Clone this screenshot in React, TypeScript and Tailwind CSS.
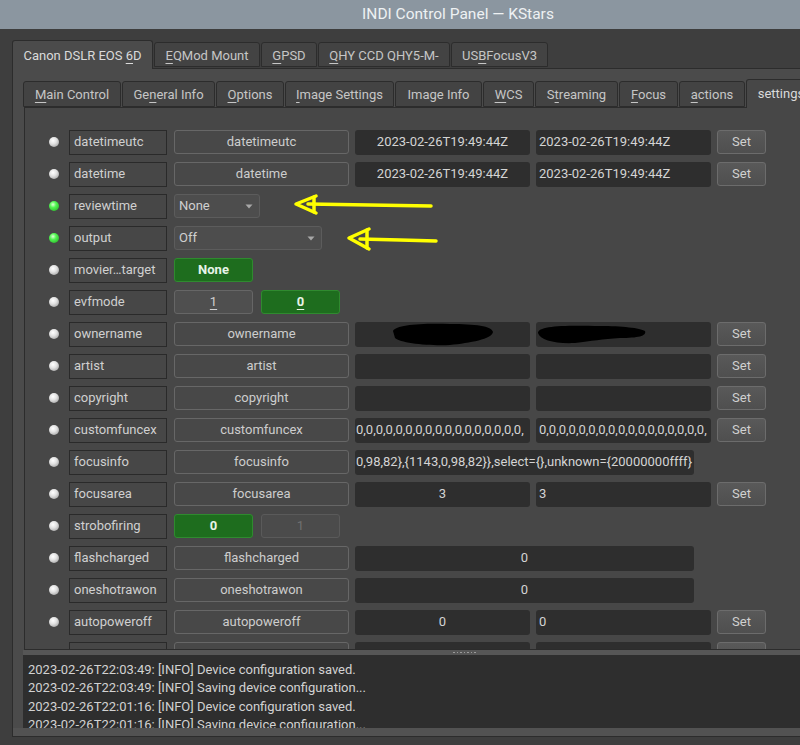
import React from "react";

type Btn = { text: string; on?: boolean; disabled?: boolean; u?: boolean };
type Row =
  | { kind: "text"; label: string; name: string; v1: string; v2: string; v1Left?: boolean; set?: string }
  | { kind: "select"; label: string; value: string; w: string }
  | { kind: "switch"; label: string; buttons: Btn[] }
  | { kind: "wide"; label: string; name: string; value: string; left?: boolean };

const stamp = "2023-02-26T19:49:44Z";
const zeros1 = "0,".repeat(17);
const zeros2 = "0,".repeat(17);

const rows: Row[] = [
  { kind: "text", label: "datetimeutc", name: "datetimeutc", v1: stamp, v2: stamp },
  { kind: "text", label: "datetime", name: "datetime", v1: stamp, v2: stamp },
  { kind: "select", label: "reviewtime", value: "None", w: "w-[86px]" },
  { kind: "select", label: "output", value: "Off", w: "w-[148px]" },
  { kind: "switch", label: "movier…target", buttons: [{ text: "None", on: true }] },
  { kind: "switch", label: "evfmode", buttons: [{ text: "1", u: true }, { text: "0", on: true, u: true }] },
  { kind: "text", label: "ownername", name: "ownername", v1: "", v2: "" },
  { kind: "text", label: "artist", name: "artist", v1: "", v2: "" },
  { kind: "text", label: "copyright", name: "copyright", v1: "", v2: "" },
  { kind: "text", label: "customfuncex", name: "customfuncex", v1: zeros1, v2: zeros2, v1Left: true },
  {
    kind: "wide",
    label: "focusinfo",
    name: "focusinfo",
    value: "0,98,82},{1143,0,98,82}},select={},unknown={20000000ffff}",
    left: true,
  },
  { kind: "text", label: "focusarea", name: "focusarea", v1: "3", v2: "3" },
  { kind: "switch", label: "strobofiring", buttons: [{ text: "0", on: true }, { text: "1", disabled: true }] },
  { kind: "wide", label: "flashcharged", name: "flashcharged", value: "0" },
  { kind: "wide", label: "oneshotrawon", name: "oneshotrawon", value: "0" },
  { kind: "text", label: "autopoweroff", name: "autopoweroff", v1: "0", v2: "0" },
  // last row is cut by the splitter, only its top edge shows
  { kind: "text", label: "", name: "", v1: "", v2: "", set: "" },
];

const greenLeds = ["reviewtime", "output"];

function Mnemonic({ text, at }: { text: string; at?: number }) {
  if (at === undefined) return <span>{text}</span>;
  return (
    <span className="whitespace-pre">
      {text.slice(0, at)}
      <span className="underline decoration-1 underline-offset-[3px]">{text[at]}</span>
      {text.slice(at + 1)}
    </span>
  );
}

const topTabs = [
  { text: "Canon DSLR EOS 6D", at: 15, w: "w-[141px]", active: true },
  { text: "EQMod Mount", at: 0, w: "w-[106px]" },
  { text: "GPSD", at: 0, w: "w-[56px]" },
  { text: "QHY CCD QHY5-M-", at: 0, w: "w-[132px]" },
  { text: "USBFocusV3", at: 2, w: "w-[97px]" },
];

const innerTabs = [
  { text: "Main Control", at: 0, w: "w-[98px]" },
  { text: "General Info", at: 2, w: "w-[93px]" },
  { text: "Options", at: 0, w: "w-[68px]" },
  { text: "Image Settings", at: 0, w: "w-[109px]" },
  { text: "Image Info", w: "w-[87px]" },
  { text: "WCS", at: 0, w: "w-[51px]" },
  { text: "Streaming", at: 1, w: "w-[83px]" },
  { text: "Focus", at: 0, w: "w-[59px]" },
  { text: "actions", at: 0, w: "w-[66px]" },
  { text: "settings", w: "w-[70px]", active: true },
];

function Led({ green }: { green?: boolean }) {
  return (
    <div
      className={`w-[10px] h-[10px] rounded-full shrink-0 ${
        green
          ? "bg-[radial-gradient(circle_at_40%_35%,#e0ffd8_0%,#52f552_35%,#1ea01e_100%)]"
          : "bg-[radial-gradient(circle_at_40%_35%,#ffffff_0%,#e2e2e2_40%,#8c8c8c_100%)]"
      }`}
    />
  );
}

function NameBtn({ text }: { text: string }) {
  return (
    <div className="w-[175px] h-[24px] shrink-0 rounded-[3px] border border-[#676767] bg-[#484848] flex items-center justify-center text-[#cdcdcd]">
      {text}
    </div>
  );
}

function Field({ text, w = "w-[175px]", align = "center" }: { text: string; w?: string; align?: string }) {
  return (
    <div
      className={`${w} h-[25px] shrink-0 rounded-[3px] bg-[#2e2e2e] flex items-center overflow-hidden whitespace-nowrap text-[#d4d4d4] ${
        align === "center" ? "justify-center" : align === "tight" ? "justify-start pl-[1px]" : "justify-start pl-[3px]"
      }`}
    >
      {text}
    </div>
  );
}

function SetBtn({ text = "Set" }: { text?: string }) {
  return (
    <div className="w-[49px] h-[24px] shrink-0 rounded-[3px] border border-[#6c6c6c] bg-[linear-gradient(#595959,#4f4f4f)] flex items-center justify-center text-[#d0d0d0]">
      {text}
    </div>
  );
}

function PropRow({ row }: { row: Row }) {
  return (
    <div className="flex items-center h-[24px] shrink-0">
      <div className="ml-[24px]">
        <Led green={greenLeds.includes(row.label)} />
      </div>
      <div className="ml-[10px] w-[98px] h-[25px] shrink-0 border border-[#2a2a2a] bg-[#474747] flex items-center pl-[4px] text-[#d0d0d0] whitespace-nowrap overflow-hidden">
        {row.label}
      </div>
      <div className="ml-[7px] flex items-center gap-[6px]">
        {row.kind === "text" && (
          <>
            <NameBtn text={row.name} />
            <Field text={row.v1} align={row.v1Left ? "tight" : "center"} />
            <Field text={row.v2} align="left" />
            <SetBtn text={row.set} />
          </>
        )}
        {row.kind === "wide" && (
          <>
            <NameBtn text={row.name} />
            <Field text={row.value} w="w-[339px]" align={row.left ? "tight" : "center"} />
          </>
        )}
        {row.kind === "select" && (
          <div
            className={`${row.w} h-[24px] rounded-[3px] border border-[#5c5c5c] bg-[#4d4d4d] flex items-center justify-between pl-[4px] pr-[6px] text-[#d0d0d0]`}
          >
            <span>{row.value}</span>
            <svg width="8" height="5" viewBox="0 0 8 5">
              <path d="M0.5 0.5 L7.5 0.5 L4 4.5 Z" fill="#a8a8a8" />
            </svg>
          </div>
        )}
        {row.kind === "switch" && (
          <div className="flex gap-[8px]">
            {row.buttons.map((b, i) => (
              <div
                key={i}
                className={`w-[79px] h-[24px] rounded-[3px] border flex items-center justify-center ${
                  b.on
                    ? "bg-[#1e6d1e] border-[#2f8a2f] text-[#e8f4e8] font-bold"
                    : b.disabled
                    ? "bg-[#4b4b4b] border-[#5a5a5a] text-[#707070]"
                    : "bg-[#4f4f4f] border-[#666666] text-[#cfcfcf]"
                }`}
              >
                {b.u ? <span className="underline decoration-1 underline-offset-[3px]">{b.text}</span> : b.text}
              </div>
            ))}
          </div>
        )}
      </div>
    </div>
  );
}

export default function App() {
  return (
    <div className="relative w-[800px] h-[745px] overflow-hidden bg-[#3e3e3e] flex flex-col font-['Roboto',sans-serif] text-[13px]">
      {/* title bar */}
      <div className="h-[29px] shrink-0 bg-[#8b96a0] flex items-center justify-center pl-[116px] text-[15.5px] text-[#eef1f3]">
        INDI Control Panel — KStars
      </div>

      <div className="flex-1 flex flex-col pl-[12px] pt-[11px] min-h-0">
        {/* device tabs */}
        <div className="h-[28px] shrink-0 flex items-end gap-[1px]">
          {topTabs.map((t) => (
            <div
              key={t.text}
              className={`${t.w} shrink-0 rounded-t-[3px] border border-[#2c2c2c] flex items-center justify-center whitespace-nowrap ${
                t.active
                  ? "h-[29px] -mb-px relative z-10 border-b-0 bg-[#4b4b4b] text-[#dadada] pt-[1px]"
                  : "h-[25px] mb-[1px] bg-[#434343] text-[#c6c6c6] pt-[3px]"
              }`}
            >
              <Mnemonic text={t.text} at={t.at} />
            </div>
          ))}
        </div>

        {/* device pane */}
        <div className="h-[669px] shrink-0 border-t border-l border-b border-[#2c2c2c] bg-[#4b4b4b] flex flex-col pl-[10px] pt-[10px]">
          {/* group tabs */}
          <div className="h-[28px] shrink-0 flex items-end gap-[1px]">
            {innerTabs.map((t) => (
              <div
                key={t.text}
                className={`${t.w} shrink-0 rounded-t-[3px] border border-[#2c2c2c] flex items-center justify-center whitespace-nowrap ${
                  t.active
                    ? "h-[29px] -mb-px relative z-10 border-b-0 bg-[#474747] text-[#dadada]"
                    : "h-[26px] bg-[#434343] text-[#c6c6c6] pt-[2px]"
                }`}
              >
                <Mnemonic text={t.text} at={t.at} />
              </div>
            ))}
          </div>

          {/* properties */}
          <div className="h-[543px] shrink-0 ml-[1px] border-t border-l border-b border-[#2c2c2c] bg-[#474747] overflow-hidden flex flex-col gap-[8px] pt-[22px]">
            {rows.map((r, i) => (
              <PropRow key={i} row={r} />
            ))}
          </div>

          {/* splitter */}
          <div className="h-[5px] shrink-0 bg-[#565656] flex items-center pl-[430px] gap-[2px]">
            {Array.from({ length: 7 }).map((_, i) => (
              <span key={i} className="w-[1.5px] h-[1.5px] bg-[#9a9a9a]" />
            ))}
          </div>

          {/* log */}
          <div className="h-[73px] shrink-0 bg-[#2e2e2e] overflow-hidden pl-[5px] pt-[6px] text-[#d2d2d2] leading-[18.3px] whitespace-nowrap">
            <div>2023-02-26T22:03:49: [INFO] Device configuration saved.</div>
            <div>2023-02-26T22:03:49: [INFO] Saving device configuration...</div>
            <div>2023-02-26T22:01:16: [INFO] Device configuration saved.</div>
            <div>2023-02-26T22:01:16: [INFO] Saving device configuration...</div>
          </div>
          <div className="flex-1 -ml-[10px] bg-[#525252]" />
        </div>
      </div>

      {/* annotations drawn over the screenshot */}
      <svg className="absolute inset-0 pointer-events-none" width="800" height="745" viewBox="0 0 800 745">
        <g stroke="#ffff00" strokeWidth="3.5" strokeLinecap="round" strokeLinejoin="round" fill="none">
          <polyline points="316,196 296,204 316,213" />
          <line x1="314" y1="197" x2="314" y2="212" />
          <line x1="308" y1="204" x2="431" y2="206" />
          <polyline points="369,229 349,238 369,249" />
          <line x1="367" y1="230" x2="367" y2="248" />
          <polyline points="360,239 400,240 436,241" />
        </g>
        <path
          d="M393,331 C396,325 420,323 450,324 C475,324 492,326 493,332 C492,339 470,343 450,345 C428,346 400,343 395,338 Z"
          fill="#000"
        />
        <path
          d="M538,333 C538,326 562,325 600,326 C622,326 640,328 645,331 C647,336 638,338 620,338 C602,339 592,341 575,343 C555,344 540,340 538,333 Z"
          fill="#000"
        />
      </svg>
    </div>
  );
}
